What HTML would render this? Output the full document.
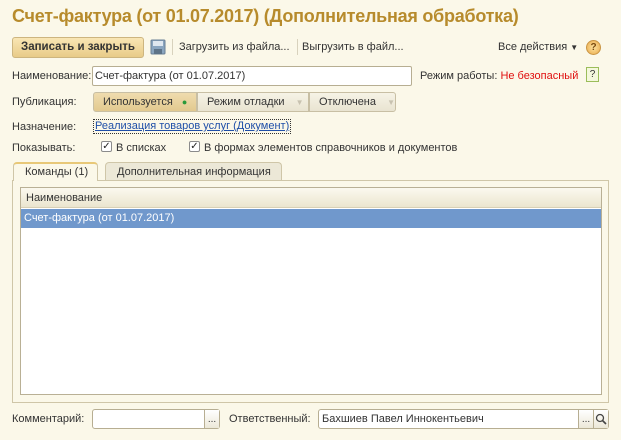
<!DOCTYPE html>
<html><head><meta charset="utf-8"><style>
*{box-sizing:border-box;margin:0;padding:0}
body{width:621px;height:440px;background:#fbf8e9;font-family:"Liberation Sans",sans-serif;font-size:11px;color:#333;position:relative;overflow:hidden}
.a{position:absolute;white-space:nowrap}
.title{left:12px;top:6px;font-size:18px;font-weight:bold;color:#b78b2c;letter-spacing:-0.25px}
.btn{left:12px;top:37px;width:132px;height:21px;border:1px solid #cdb57f;border-radius:3px;background:linear-gradient(#f9e6b4,#e8cb88);font-weight:bold;color:#333;line-height:19px;text-align:center;font-size:11.5px}
.sep{width:1px;height:16px;background:#d8d2bd}
.inp{background:#fff;border:1px solid #b7ae92;border-radius:2px;height:20px;line-height:18px;padding-left:2px}
.seg{top:92px;height:20px;line-height:18px;border:1px solid #c8bfa4;padding-left:9px;background:linear-gradient(#f6f3e6,#e9e4d1)}
.chk{width:11px;height:11px;border:1px solid #8b8b8b;border-radius:2px;background:#fff;font-size:10px;line-height:9px;text-align:center;color:#222}
.dots{border-left:1px solid #b7ae92;width:15px;height:18px;background:linear-gradient(#fff,#ece8d8);text-align:center;font-size:10px;line-height:20px}
</style></head><body>
<div class="a title">Счет-фактура (от 01.07.2017) (Дополнительная обработка)</div>
<div class="a btn">Записать и закрыть</div>
<svg class="a" style="left:150px;top:39px" width="16" height="16"><rect x="1" y="1" width="14" height="14" rx="1" fill="#8aa5bf" stroke="#6a7f95"/><rect x="3" y="2" width="10" height="5" fill="#dfe7ef"/><rect x="4" y="10" width="8" height="5" fill="#5d7388"/></svg>
<div class="a sep" style="left:172px;top:39px"></div>
<div class="a" style="left:179px;top:41px">Загрузить из файла...</div>
<div class="a sep" style="left:297px;top:39px"></div>
<div class="a" style="left:302px;top:41px">Выгрузить в файл...</div>
<div class="a" style="left:498px;top:41px">Все действия <span style="font-size:8px">▼</span></div>
<div class="a" style="left:586px;top:40px;width:15px;height:15px;border-radius:50%;background:radial-gradient(#fde3a0,#e9a94a);border:1px solid #c99544;color:#7a4a10;font-size:10px;text-align:center;line-height:13px;font-weight:bold">?</div>

<div class="a" style="left:12px;top:70px">Наименование:</div>
<div class="a inp" style="left:92px;top:66px;width:320px">Счет-фактура (от 01.07.2017)</div>
<div class="a" style="left:420px;top:70px">Режим работы: <span style="color:#e01010">Не безопасный</span></div>
<div class="a" style="left:586px;top:67px;width:13px;height:15px;border:1px solid #9bbd5a;background:#f4f8dc;font-size:10px;text-align:center;line-height:13px">?</div>

<div class="a" style="left:12px;top:96px">Публикация:</div>
<div class="a seg" style="left:93px;width:104px;background:linear-gradient(#efdcae,#e2c98f);border-radius:3px 0 0 3px">Используется <span style="color:#2a9a3a;font-size:9px;margin-left:6px">●</span></div>
<div class="a seg" style="left:197px;width:112px">Режим отладки <span style="color:#c8c2b0;font-size:8px;margin-left:8px">▼</span></div>
<div class="a seg" style="left:309px;width:87px;border-radius:0 3px 3px 0">Отключена <span style="color:#c8c2b0;font-size:8px;margin-left:8px">▼</span></div>

<div class="a" style="left:12px;top:121px">Назначение:</div>
<div class="a" style="left:93px;top:119px;color:#1f4fa8;text-decoration:underline;border:1px dotted #333;padding:0 1px;line-height:13px">Реализация товаров услуг (Документ)</div>

<div class="a" style="left:12px;top:142px">Показывать:</div>
<div class="a chk" style="left:101px;top:141px">✓</div>
<div class="a" style="left:116px;top:142px">В списках</div>
<div class="a chk" style="left:189px;top:141px">✓</div>
<div class="a" style="left:204px;top:142px">В формах элементов справочников и документов</div>

<div class="a" style="left:12px;top:180px;width:597px;height:223px;border:1px solid #cfc6a8"></div>
<div class="a" style="left:13px;top:162px;width:85px;height:19px;border:1px solid #cfc6a8;border-bottom:none;border-radius:4px 4px 0 0;background:#fbf8e9;padding:2px 0 0 11px;border-top:2px solid #e8c878">Команды (1)</div>
<div class="a" style="left:105px;top:162px;width:177px;height:18px;border:1px solid #cfc6a8;border-bottom:none;border-radius:4px 4px 0 0;background:#ece8d7;padding:3px 0 0 11px">Дополнительная информация</div>

<div class="a" style="left:20px;top:187px;width:582px;height:208px;border:1px solid #b9b095;background:#fff"></div>
<div class="a" style="left:21px;top:188px;width:580px;height:20px;background:linear-gradient(#fbf9ef,#ebe5cf);border-bottom:1px solid #d8d0b4;padding:4px 0 0 5px">Наименование</div>
<div class="a" style="left:21px;top:209px;width:580px;height:19px;background:#7098cc;color:#fff;padding:3px 0 0 3px">Счет-фактура (от 01.07.2017)</div>

<div class="a" style="left:12px;top:413px">Комментарий:</div>
<div class="a inp" style="left:92px;top:409px;width:128px;height:20px;border-radius:3px"><div class="a dots" style="right:0;top:0">...</div></div>
<div class="a" style="left:229px;top:413px">Ответственный:</div>
<div class="a inp" style="left:318px;top:409px;width:291px;height:20px;border-radius:3px;padding-left:3px">Бахшиев Павел Иннокентьевич<div class="a dots" style="right:15px;top:0">...</div><div class="a dots" style="right:0;top:0"><svg width="14" height="18"><circle cx="6" cy="8" r="3.5" fill="none" stroke="#444" stroke-width="1.3"/><path d="M8.5 10.5L12 14" stroke="#444" stroke-width="1.6"/></svg></div></div>
</body></html>
